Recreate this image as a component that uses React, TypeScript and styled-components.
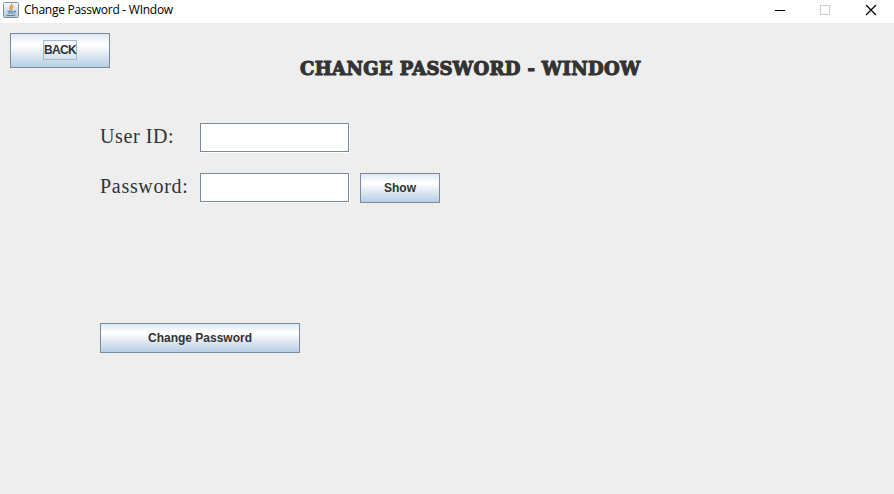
import React from "react";
import styled, { createGlobalStyle } from "styled-components";

const GlobalStyle = createGlobalStyle`
  * { box-sizing: border-box; }
  body { margin: 0; background: #eee; overflow: hidden; }
`;

const Window = styled.div`
  display: flex;
  flex-direction: column;
  width: 894px;
  height: 494px;
  background: #eeeeee;
  color: #333333;
`;

const TitleBar = styled.header`
  display: flex;
  align-items: center;
  height: 23px;
  padding: 0 17px 3px 3px;
  background: #ffffff;
`;

const WindowTitle = styled.span`
  flex: 1;
  margin-left: 5px;
  color: #000;
  font: 12px/18px "Open Sans", "Noto Sans", sans-serif;
  letter-spacing: -0.26px;
  white-space: nowrap;
`;

const WindowControls = styled.div`
  display: flex;
  justify-content: space-between;
  width: 103px;
  svg { display: block; }
`;

const Content = styled.main`
  display: flex;
  flex-direction: column;
  align-items: flex-start;
  padding: 10px;
`;

const Header = styled.div`
  display: flex;
  height: 90px;
`;

const Heading = styled.h1`
  margin: 23px 0 0 190px;
  font: bold 18px/26px "DejaVu Serif", serif;
  letter-spacing: 0.36px;
  -webkit-text-stroke: 1.1px #333;
  white-space: nowrap;
`;

const MetalButton = styled.button<{ $width: number; $height?: number; $spacing?: number }>`
  display: flex;
  align-items: center;
  justify-content: center;
  width: ${(p) => p.$width}px;
  height: ${(p) => p.$height ?? 30}px;
  padding: 0;
  border: 1px solid #7a8a99;
  background: linear-gradient(#dde8f3 0%, #ffffff 30%, #ffffff 34%, #dce7f2 65%, #b8cfe5 100%);
  color: #333333;
  font: bold 12px/14px "Liberation Sans", Arial, sans-serif;
  letter-spacing: ${(p) => p.$spacing ?? 0}px;
  white-space: nowrap;
`;

const FocusFrame = styled.span`
  display: flex;
  width: 34px;
  height: 20px;
  margin-bottom: 1px;
  border: 1px solid #a3b8cc;
  line-height: 18px;
`;

const Form = styled.form`
  display: grid;
  grid-template-columns: 100px 150px 80px;
  grid-template-rows: 30px 30px;
  row-gap: 20px;
  column-gap: 0;
  margin-left: 90px;
`;

const Label = styled.label<{ $spacing: number }>`
  font: 20px/26px "Liberation Serif", serif;
  letter-spacing: ${(p) => p.$spacing}px;
  white-space: nowrap;
`;

const Field = styled.input`
  width: 149px;
  height: 29px;
  padding: 0 3px;
  border: 1px solid #7a8a99;
  border-radius: 0;
  outline: none;
  background: #fff;
  box-shadow: 1px 1px 0 #fff;
  font: 12px "Liberation Sans", sans-serif;
`;

const ShowCell = styled.div`
  grid-column: 3;
  margin-left: 10px;
`;

const Actions = styled.div`
  margin: 120px 0 0 90px;
`;

const JavaIcon = () => (
  <svg width="16" height="16" viewBox="0 0 16 16">
    <defs>
      <linearGradient id="tile" x2="0" y2="1">
        <stop stopColor="#f8fafb" />
        <stop offset="1" stopColor="#b9cbd8" />
      </linearGradient>
    </defs>
    <rect x=".5" y=".5" width="15" height="15" rx="1" fill="url(#tile)" stroke="#7890a1" />
    <path d="M9 2C9.4 4 5.2 4.8 7.6 8M10.6 4.2C8 5.4 9.6 6.2 8.2 8" fill="none" stroke="#dc873b" strokeWidth="1.2" />
    <path d="M4.5 9.2h6M5.2 11h5M3.5 13.2q4.5 1 9-.2M11 9q2.2-.2 1.5 1.1-.5.8-2 1" fill="none" stroke="#4d7796" />
  </svg>
);

export default function App() {
  return (
    <>
      <GlobalStyle />
      <Window>
        <TitleBar>
          <JavaIcon />
          <WindowTitle>Change Password - WIndow</WindowTitle>
          <WindowControls>
            <svg width="12" height="12" viewBox="0 0 12 12">
              <path d="M1 6.5h10" stroke="#000" />
            </svg>
            <svg width="12" height="12" viewBox="0 0 12 12">
              <rect x="0.5" y="1.5" width="9" height="9" fill="none" stroke="#ccc" />
            </svg>
            <svg width="12" height="12" viewBox="0 0 12 12">
              <path d="M1 1l10 10M11 1L1 11" stroke="#000" strokeWidth="1.2" />
            </svg>
          </WindowControls>
        </TitleBar>
        <Content>
          <Header>
            <MetalButton $width={100} $height={35} $spacing={-0.65}>
              <FocusFrame>BACK</FocusFrame>
            </MetalButton>
            <Heading>CHANGE PASSWORD - WINDOW</Heading>
          </Header>
          <Form onSubmit={(e) => e.preventDefault()}>
            <Label htmlFor="user" $spacing={0.6}>User ID:</Label>
            <Field id="user" />
            <span />
            <Label htmlFor="password" $spacing={0.7}>Password:</Label>
            <Field id="password" type="password" />
            <ShowCell>
              <MetalButton type="button" $width={80}>Show</MetalButton>
            </ShowCell>
          </Form>
          <Actions>
            <MetalButton $width={200}>Change Password</MetalButton>
          </Actions>
        </Content>
      </Window>
    </>
  );
}
